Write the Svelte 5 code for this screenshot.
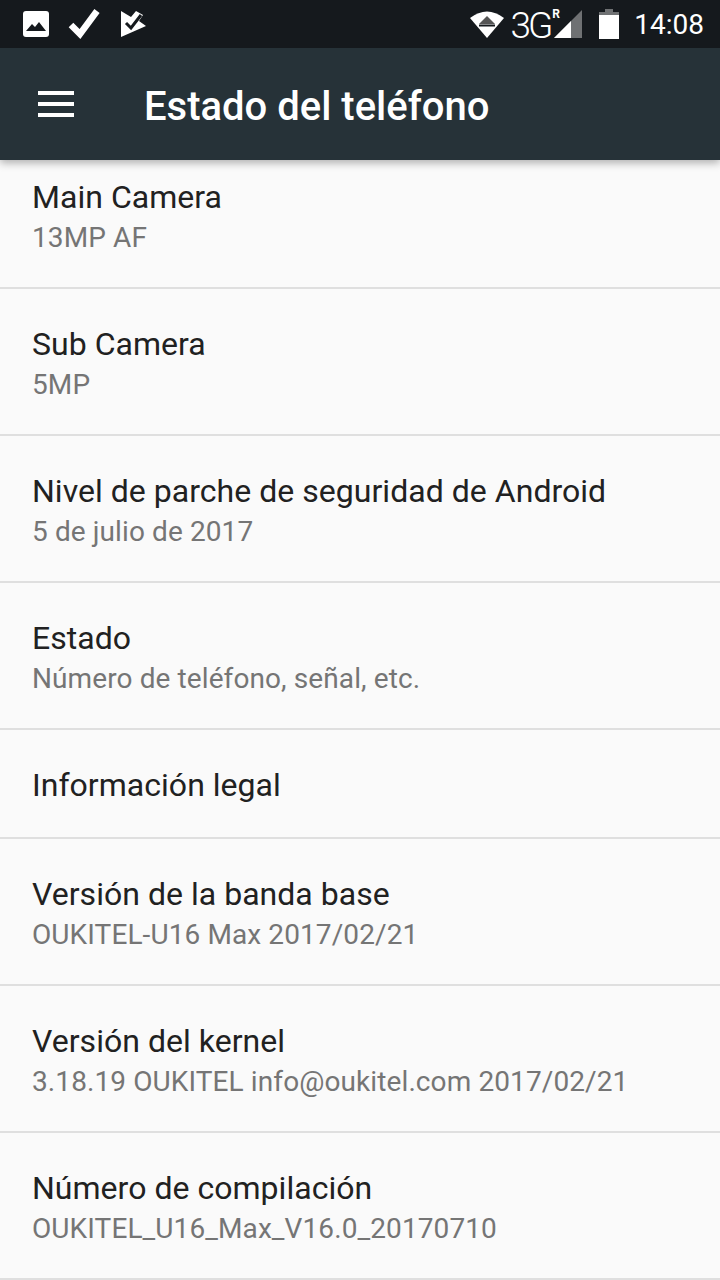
<script>
  const rows = [
    { t: 'Main Camera', s: '13MP AF' },
    { t: 'Sub Camera', s: '5MP' },
    { t: 'Nivel de parche de seguridad de Android', s: '5 de julio de 2017' },
    { t: 'Estado', s: 'Número de teléfono, señal, etc.' },
    { t: 'Información legal' },
    { t: 'Versión de la banda base', s: 'OUKITEL-U16 Max 2017/02/21' },
    { t: 'Versión del kernel', s: '3.18.19 OUKITEL info@oukitel.com 2017/02/21' },
    { t: 'Número de compilación', s: 'OUKITEL_U16_Max_V16.0_20170710' }
  ];
</script>

<div class="screen">
  <div class="status">
    <div class="left">
      <svg width="28" height="28" viewBox="0 0 28 28"><rect x="1" y="1" width="26" height="26" rx="3" fill="#fff"/><path d="M4 21l6-7 3 3 4-5 7 9z" fill="#15191d"/></svg>
      <svg class="check" width="36" height="36" viewBox="0 0 36 36"><path d="M5 19l9 9L31 5" fill="none" stroke="#fff" stroke-width="6.5"/></svg>
      <svg class="play" width="28" height="28" viewBox="0 0 28 28"><path d="M1 1l10 6 5-6 7 4-4 6 7 5L1 27z" fill="#fff"/><path d="M6 13l5 5 10-13" fill="none" stroke="#15191d" stroke-width="3"/></svg>
    </div>
    <div class="right">
      <svg class="wifi" width="34" height="28" viewBox="0 0 34 28"><path d="M0 8Q17-5 34 8L17 28z" fill="#fff"/><path d="M17 6l8 8H9z" fill="#555"/><path d="M9 15.5h16" stroke="#15191d" stroke-width="2"/></svg>
      <span class="net">3G</span><span class="r">R</span>
      <svg class="signal" width="28" height="28" viewBox="0 0 28 28"><path d="M28 0v28H0z" fill="#6f7173"/><path d="M17 11v17H0z" fill="#fff"/></svg>
      <svg class="batt" width="20" height="30" viewBox="0 0 20 30"><path d="M6 0h8v3h6v4H0V3h6z" fill="#6f7173"/><rect x="0" y="6" width="20" height="24" fill="#fff"/></svg>
      <span class="time">14:08</span>
    </div>
  </div>
  <header class="bar">
    <div class="menu"><i></i><i></i><i></i></div>
    <h1>Estado del teléfono</h1>
  </header>
  <main class="list">
    {#each rows as r, i}
      <div class="row" class:first={i === 0} class:single={!r.s}>
        <div class="title">{r.t}</div>
        {#if r.s}<div class="sub">{r.s}</div>{/if}
      </div>
    {/each}
  </main>
</div>

<style>
  :global(body) { margin: 0; background: #fafafa; }
  .screen { width: 720px; height: 1280px; overflow: hidden; display: flex; flex-direction: column; font-family: Roboto, sans-serif; background: #fafafa; }
  .status { height: 48px; background: #15191d; display: flex; justify-content: space-between; align-items: center; color: #fff; flex: none; position: relative; z-index: 2; }
  .left { display: flex; align-items: center; padding-left: 22px; gap: 16px; }
  .play { margin-left: 2px; }
  .right { display: flex; align-items: center; padding-right: 16px; }
  .wifi { margin-right: 6px; }
  .net { font-size: 37px; letter-spacing: -3px; font-weight: 300; line-height: 48px; margin-top: 3px; margin-right: 1px; }
  .r { font-size: 12px; font-weight: 700; align-self: flex-start; margin-top: 8px; margin-left: 1px; width: 0; }
  .signal { margin-left: 2px; }
  .batt { margin-left: 17px; }
  .time { font-size: 28px; margin-left: 15px; font-weight: 400; }
  .bar { height: 112px; background: #263238; display: flex; align-items: center; flex: none; box-shadow: 0 3px 8px rgba(0,0,0,.3); position: relative; z-index: 1; }
  .menu { margin-left: 38px; width: 36px; display: flex; flex-direction: column; gap: 7px; }
  .menu i { display: block; height: 4px; background: #fff; }
  h1 { margin: 6px 0 0 70px; font-size: 40px; font-weight: 500; color: #fff; line-height: 44px; }
  .row { height: 110px; padding-top: 36px; border-bottom: 2px solid #dfdfdf; padding-left: 32px; margin-bottom: -1px; }
  .row.first { height: 110px; padding-top: 17px; }
  .row.single { height: 72px; }
  .title { font-size: 32px; line-height: 40px; color: #212121; letter-spacing: .03px; }
  .sub { font-size: 28px; line-height: 40px; color: #757575; margin-top: 1px; letter-spacing: .1px; }
</style>
